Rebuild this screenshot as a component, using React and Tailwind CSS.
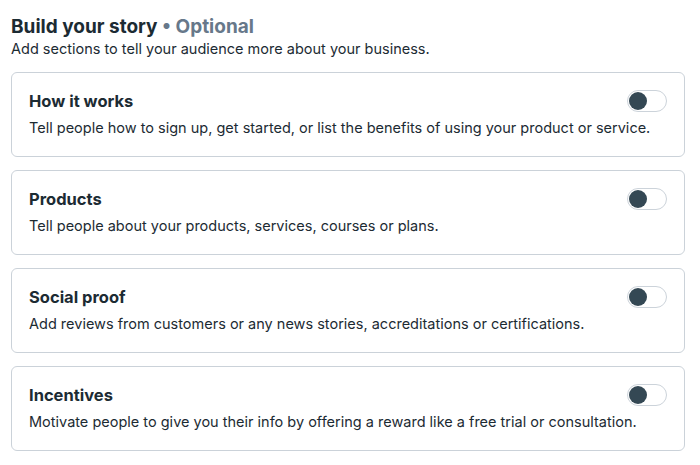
import { useState } from "react";

const sections = [
  {
    title: "How it works",
    text: "Tell people how to sign up, get started, or list the benefits of using your product or service.",
  },
  {
    title: "Products",
    text: "Tell people about your products, services, courses or plans.",
  },
  {
    title: "Social proof",
    text: "Add reviews from customers or any news stories, accreditations or certifications.",
  },
  {
    title: "Incentives",
    text: "Motivate people to give you their info by offering a reward like a free trial or consultation.",
  },
];

function Toggle({ on, onChange }) {
  return (
    <button
      type="button"
      onClick={onChange}
      className={`flex h-[22px] w-[40px] shrink-0 items-center rounded-full border border-[#ccd3da] bg-white px-[1px] ${on ? "justify-end" : "justify-start"}`}
    >
      <span className="h-[18px] w-[18px] rounded-full bg-[#344854]" />
    </button>
  );
}

function SectionCard({ title, text }) {
  const [on, setOn] = useState(false);
  return (
    <div className="rounded-[6px] border border-[#cbd2d9] bg-white px-[17px] pb-[18px] pt-[17px]">
      <div className="flex items-center justify-between">
        <div className="text-[16.5px] font-bold leading-[22px] text-[#1c2b33]">{title}</div>
        <Toggle on={on} onChange={() => setOn(!on)} />
      </div>
      <div className="mt-[6px] text-[14.5px] leading-[20px] text-[#1c2b33]">{text}</div>
    </div>
  );
}

export default function App() {
  return (
    <div className="min-h-screen bg-white px-[11px] pt-[15px] font-['Inter',sans-serif]">
      <h2 className="text-[19px] font-bold leading-[24px] text-[#1c2b33]">
        Build your story <span className="text-[#67788a]">• Optional</span>
      </h2>
      <p className="text-[14.5px] leading-[20px] text-[#1c2b33]">
        Add sections to tell your audience more about your business.
      </p>
      <div className="mt-[13px] flex w-[674px] flex-col gap-[13px]">
        {sections.map((s) => (
          <SectionCard key={s.title} title={s.title} text={s.text} />
        ))}
      </div>
    </div>
  );
}
